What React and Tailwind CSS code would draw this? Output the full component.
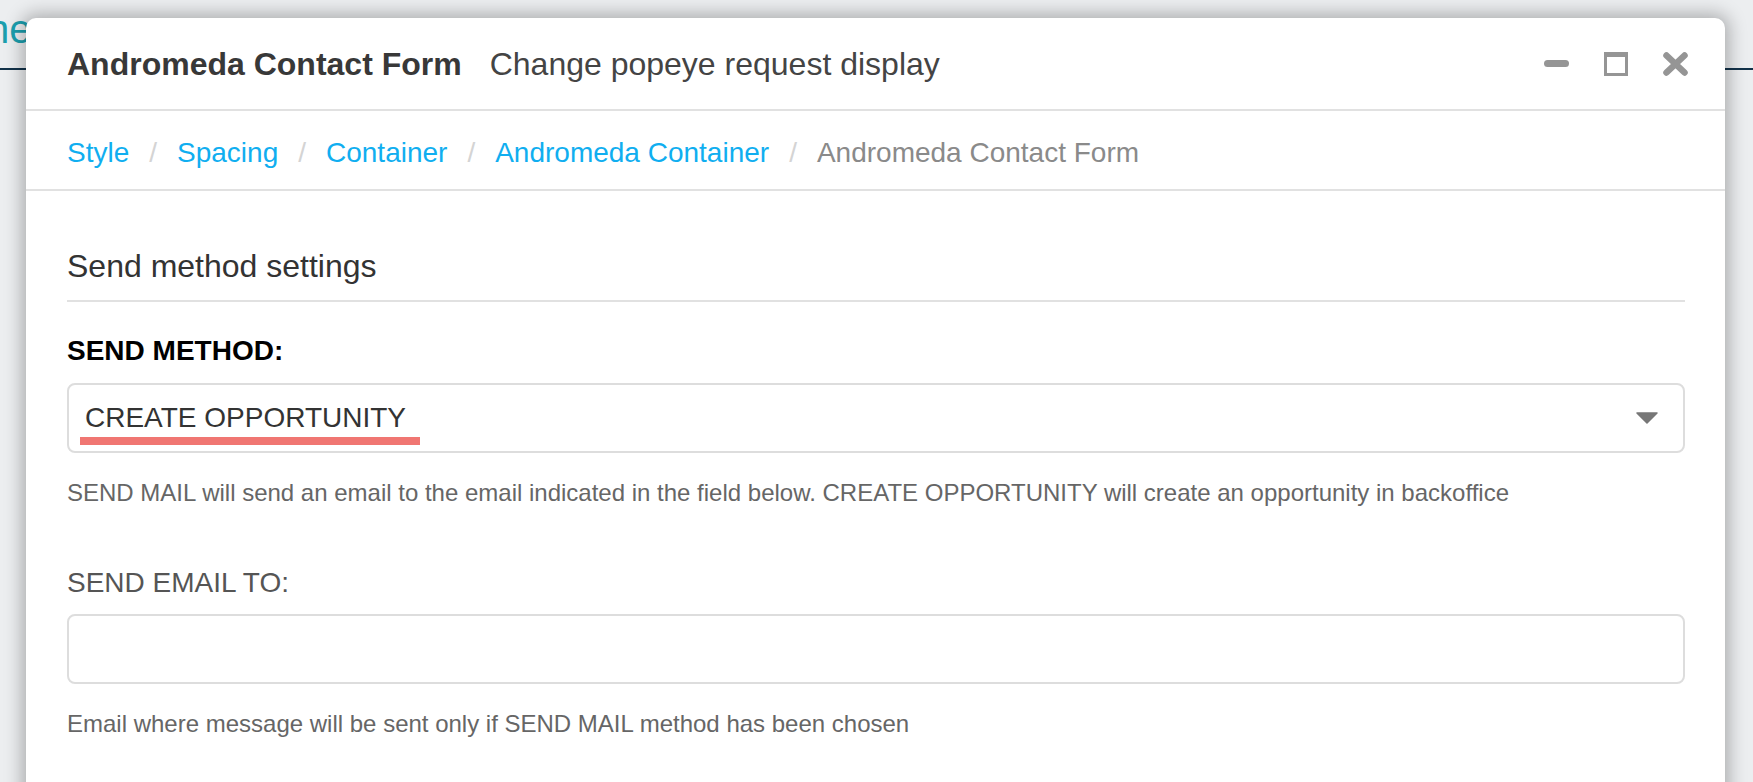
export default function App() {
  const crumbs = ["Style", "Spacing", "Container", "Andromeda Container"];
  return (
    <div className="relative h-[782px] w-[1753px] overflow-hidden bg-[#eceef0] font-['Liberation_Sans',Arial,sans-serif]">
      {/* page behind the modal */}
      <div className="h-[70px] border-b-2 border-[#12324a]">
        <div className="ml-[-13px] pt-[5px] text-[40px] leading-[48px] text-[#1b9fae]">ne</div>
      </div>

      {/* modal */}
      <div className="absolute left-[26px] top-[18px] flex h-[820px] w-[1699px] flex-col rounded-t-[10px] bg-white shadow-[0_0_18px_4px_rgba(0,0,0,0.28)]">
        <header className="flex h-[93px] shrink-0 items-center border-b-2 border-[#e1e1e1] pl-[41px] pr-[37px]">
          <span className="text-[32px] font-bold text-[#383838]">Andromeda Contact Form</span>
          <span className="ml-[28px] text-[32px] text-[#444]">Change popeye request display</span>
          <div className="ml-auto flex items-center gap-[35px]">
            <svg width="25" height="7" viewBox="0 0 25 7">
              <rect x="0" y="0" width="25" height="7" rx="3.5" fill="#959595" />
            </svg>
            <svg width="24" height="24" viewBox="0 0 24 24">
              <rect x="1.5" y="1.5" width="21" height="21" fill="none" stroke="#959595" strokeWidth="3" />
              <rect x="0" y="0" width="24" height="5" fill="#959595" />
            </svg>
            <svg width="25" height="24" viewBox="0 0 25 24">
              <path d="M3.5 3.5 L21.5 20.5 M21.5 3.5 L3.5 20.5" stroke="#959595" strokeWidth="6.5" strokeLinecap="round" fill="none" />
            </svg>
          </div>
        </header>

        <nav className="flex h-[80px] shrink-0 items-center border-b-2 border-[#e1e1e1] pl-[41px] pt-[6px] text-[28px]">
          {crumbs.map((c) => (
            <span key={c} className="flex items-center">
              <span className="text-[#10aef0]">{c}</span>
              <span className="mx-[20px] text-[#d4d4d4]">/</span>
            </span>
          ))}
          <span className="text-[#8a8a8a]">Andromeda Contact Form</span>
        </nav>

        <div className="pl-[41px] pr-[40px] pt-[55px]">
          <h2 className="border-b-2 border-[#e1e1e1] pb-[14px] text-[32px] leading-[40px] font-normal text-[#333]">
            Send method settings
          </h2>

          <div className="mt-[33px] text-[28px] font-bold leading-[32px] text-black">SEND METHOD:</div>
          <div className="relative mt-[16px] flex h-[70px] items-center justify-between rounded-[8px] border-2 border-[#dddddd] pl-[16px] pr-[25px]">
            <span className="text-[28px] text-[#333]">CREATE OPPORTUNITY</span>
            <svg width="22" height="12" viewBox="0 0 22 12">
              <path d="M1 1 L21 1 L11 11 Z" fill="#777" stroke="#777" strokeWidth="1.5" strokeLinejoin="round" />
            </svg>
            <div className="absolute left-[11px] top-[52px] h-[8px] w-[340px] bg-[#f07672]" />
          </div>
          <p className="mt-[26px] text-[24px] leading-[28px] text-[#666]">
            SEND MAIL will send an email to the email indicated in the field below. CREATE OPPORTUNITY will create an opportunity in backoffice
          </p>

          <div className="mt-[60px] text-[28px] leading-[32px] text-[#555]">SEND EMAIL TO:</div>
          <div className="mt-[15px] h-[70px] rounded-[8px] border-2 border-[#dddddd]" />
          <p className="mt-[26px] text-[24px] leading-[28px] text-[#666]">
            Email where message will be sent only if SEND MAIL method has been chosen
          </p>
        </div>
      </div>
    </div>
  );
}
